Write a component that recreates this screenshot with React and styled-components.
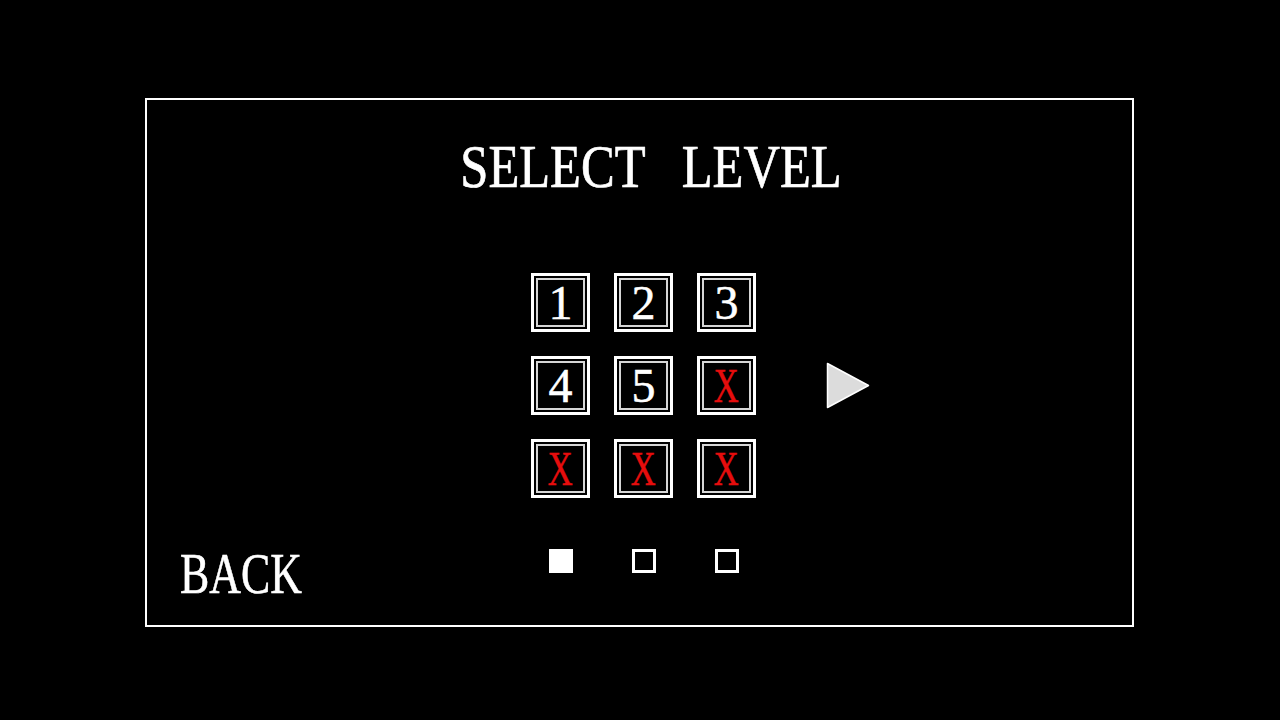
import React, { useState } from 'react'
import styled, { createGlobalStyle } from 'styled-components'

const GlobalStyle = createGlobalStyle`
  html, body {
    margin: 0;
    padding: 0;
    background: #000;
  }
  body {
    width: 1280px;
    height: 720px;
    overflow: hidden;
    font-family: "Liberation Serif", "Times New Roman", serif;
    color: #fff;
  }
`

const levels = [
    { id: 1, open: true },
    { id: 2, open: true },
    { id: 3, open: true },
    { id: 4, open: true },
    { id: 5, open: true },
    { id: 6, open: false },
    { id: 7, open: false },
    { id: 8, open: false },
    { id: 9, open: false },
]

const App = () => {

    const [page, setPage] = useState(0);

    return (
        <>
            <GlobalStyle />
            <Frame>
                <Title><TitleText>SELECT LEVEL</TitleText></Title>

                <BoardRow>
                    <span />
                    <Board>
                        {levels.map(level => (
                            <Tile key={level.id}>
                                <TileInner>
                                    {level.open
                                        ? <Digit>{level.id}</Digit>
                                        : <Locked>X</Locked>}
                                </TileInner>
                            </Tile>
                        ))}
                    </Board>
                    <NextButton onClick={() => setPage((page + 1) % 3)}>
                        <svg width="44" height="47" viewBox="0 0 44 47">
                            <polygon points="1.5,1.5 42.5,23.5 1.5,45.5" fill="#dcdcdc" stroke="#fff" strokeWidth="1.5" strokeLinejoin="round" />
                        </svg>
                    </NextButton>
                </BoardRow>

                <Footer>
                    <BackButton>BACK</BackButton>
                    <Pager>
                        {[0, 1, 2].map(i => (
                            <PageDot key={i} $active={i === page} onClick={() => setPage(i)} />
                        ))}
                    </Pager>
                </Footer>
            </Frame>
        </>
    )
}

export default App


const Frame = styled.div`
    box-sizing: border-box;
    width: 989px;
    height: 529px;
    margin: 98px 0 0 145px;
    border: 2px solid #fff;
    display: flex;
    flex-direction: column;
`

const Title = styled.h1`
    margin: 35px 0 0;
    padding-left: 23px;
    height: 62px;
    text-align: center;
    font-weight: normal;
    font-size: 62px;
    line-height: 1;
`

const TitleText = styled.span`
    display: inline-block;
    white-space: pre;
    word-spacing: 30px;
    transform: scaleX(0.815);
    -webkit-text-stroke: 0.7px #fff;
`

const BoardRow = styled.div`
    margin-top: 76px;
    padding-left: 8px;
    display: grid;
    grid-template-columns: 1fr auto 1fr;
`

const Board = styled.div`
    display: grid;
    grid-template-columns: repeat(3, 59px);
    grid-auto-rows: 59px;
    gap: 24px;
`

const Tile = styled.div`
    box-sizing: border-box;
    border: 3px solid #fff;
    padding: 2px;
    cursor: pointer;
`

const TileInner = styled.div`
    box-sizing: border-box;
    height: 100%;
    border: 2px solid #d6d6d6;
    display: flex;
    align-items: center;
    justify-content: center;
    font-size: 48px;
    line-height: 1;
    -webkit-text-stroke: 0.5px currentColor;
`

const Digit = styled.span`
    color: #fff;
`

const Locked = styled.span`
    display: inline-block;
    color: #e60d0d;
    transform: scaleX(0.72);
`

const NextButton = styled.div`
    align-self: center;
    margin-left: 70px;
    width: 44px;
    height: 47px;
    cursor: pointer;

    svg {
        display: block;
    }
`

const Footer = styled.div`
    margin-top: 47px;
    padding-left: 8px;
    display: grid;
    grid-template-columns: 1fr auto 1fr;
    align-items: start;
`

const BackButton = styled.div`
    justify-self: start;
    margin-left: 25px;
    font-size: 57px;
    line-height: 1;
    transform: scaleX(0.77);
    transform-origin: left center;
    -webkit-text-stroke: 0.6px #fff;
    cursor: pointer;
`

const Pager = styled.div`
    margin-top: 4px;
    display: grid;
    grid-template-columns: repeat(3, 59px);
    gap: 24px;
    justify-items: center;
`

const PageDot = styled.div`
    box-sizing: border-box;
    width: 24px;
    height: 24px;
    border: 3px solid #fff;
    background: ${props => props.$active ? '#fff' : 'transparent'};
    cursor: pointer;
`
